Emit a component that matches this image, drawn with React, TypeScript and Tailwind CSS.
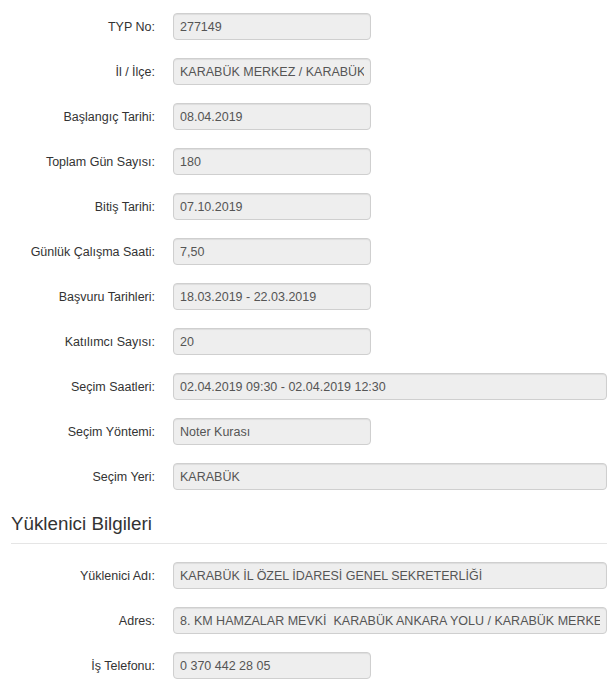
import React from 'react';

interface Field {
  label: string;
  value: string;
  wide?: boolean;
}

const projectFields: Field[] = [
  { label: 'TYP No:', value: '277149' },
  { label: 'İl / İlçe:', value: 'KARABÜK MERKEZ / KARABÜK' },
  { label: 'Başlangıç Tarihi:', value: '08.04.2019' },
  { label: 'Toplam Gün Sayısı:', value: '180' },
  { label: 'Bitiş Tarihi:', value: '07.10.2019' },
  { label: 'Günlük Çalışma Saati:', value: '7,50' },
  { label: 'Başvuru Tarihleri:', value: '18.03.2019 - 22.03.2019' },
  { label: 'Katılımcı Sayısı:', value: '20' },
  { label: 'Seçim Saatleri:', value: '02.04.2019 09:30 - 02.04.2019 12:30', wide: true },
  { label: 'Seçim Yöntemi:', value: 'Noter Kurası' },
  { label: 'Seçim Yeri:', value: 'KARABÜK', wide: true },
];

const contractorFields: Field[] = [
  { label: 'Yüklenici Adı:', value: 'KARABÜK İL ÖZEL İDARESİ GENEL SEKRETERLİĞİ', wide: true },
  { label: 'Adres:', value: '8. KM HAMZALAR MEVKİ  KARABÜK ANKARA YOLU / KARABÜK MERKEZ / KARABÜK', wide: true },
  { label: 'İş Telefonu:', value: '0 370 442 28 05' },
];

const FormRow = ({ field }: { field: Field }) => (
  <div className="flex items-center h-[27px] mb-[18px]">
    <label className="w-[144px] text-right text-[#333] text-[12.5px] leading-[18px]">{field.label}</label>
    <div
      className={`ml-[18px] h-[27px] flex items-center px-[6px] rounded-[4px] border border-[#cfcfcf] bg-[#eeeeee] shadow-[inset_0_1px_1px_rgba(0,0,0,0.075)] ${
        field.wide ? 'w-[434px]' : 'w-[198px]'
      }`}
    >
      <div className="overflow-hidden whitespace-pre text-[#555] text-[12.5px] leading-[18px] w-full">{field.value}</div>
    </div>
  </div>
);

export default function App() {
  return (
    <div className="w-[616px] h-[692px] bg-white pt-[13px] pl-[11px] font-['Liberation_Sans',Arial,sans-serif]">
      <div className="w-[596px]">
        {projectFields.map((f) => (
          <FormRow key={f.label} field={f} />
        ))}

        <h3 className="mt-[23px] pb-[9px] border-b border-[#e5e5e5] text-[18.8px] leading-[21px] text-[#333] font-normal">
          Yüklenici Bilgileri
        </h3>

        <div className="mt-[18px]">
          {contractorFields.map((f) => (
            <FormRow key={f.label} field={f} />
          ))}
        </div>
      </div>
    </div>
  );
}
